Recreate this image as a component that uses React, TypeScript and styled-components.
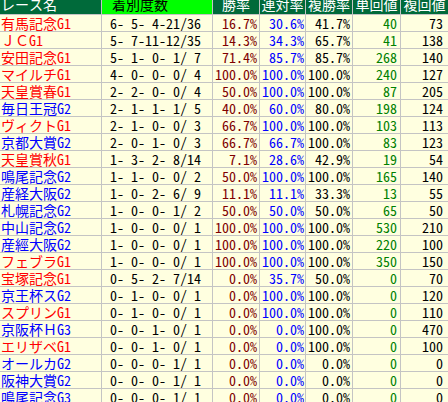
import React from "react";
import styled, { createGlobalStyle } from "styled-components";

const Global = createGlobalStyle`
  html, body { margin: 0; padding: 0; background: #ffffff; overflow: hidden; }
  body { width: 448px; height: 402px; }
`;

const COLS = "101px 110px 46px 45px 46px 47px 47px";
const MONO = `"Noto Sans Mono CJK JP", "DejaVu Sans Mono", monospace`;

const Table = styled.div`
  width: 448px;
  height: 402px;
  overflow: hidden;
  display: flex;
  flex-direction: column;
  row-gap: 1px;
  background: #c4c4c4;
  font-family: ${MONO};
`;

const HeaderRow = styled.div`
  display: grid;
  grid-template-columns: ${COLS};
  column-gap: 1px;
  height: 14px;
  flex: none;
`;

const HeaderCell = styled.div<{ $bright?: boolean; $left?: number }>`
  background: ${(p) => (p.$bright ? "#00ff00" : "#006a3a")};
  color: ${(p) => (p.$bright ? "#000000" : "#ffffff")};
  font-size: 14px;
  line-height: 8px;
  height: 14px;
  overflow: hidden;
  white-space: nowrap;
  display: flex;
  align-items: flex-start;
  justify-content: ${(p) => (p.$left !== undefined ? "flex-start" : "center")};
  padding-left: ${(p) => p.$left ?? 0}px;
`;

const Row = styled.div`
  display: grid;
  grid-template-columns: ${COLS};
  column-gap: 1px;
  height: 16px;
  flex: none;
`;

const Cell = styled.div<{ $color: string; $pad?: number; $left?: boolean }>`
  background: #ffffe0;
  color: ${(p) => p.$color};
  font-size: 14px;
  line-height: 16px;
  white-space: pre;
  display: flex;
  align-items: center;
  justify-content: ${(p) => (p.$left ? "flex-start" : "flex-end")};
  padding: ${(p) => (p.$left ? `0 0 0 ${p.$pad ?? 0}px` : `0 ${p.$pad ?? 2}px 0 0`)};
  overflow: hidden;
`;

type R = [string, string, string, string, string, string, string];

const rows: R[] = [
  ["有馬記念G1", "6- 5- 4-21/36", "16.7%", "30.6%", "41.7%", "40", "73"],
  ["ＪＣG1", "5- 7-11-12/35", "14.3%", "34.3%", "65.7%", "41", "138"],
  ["安田記念G1", "5- 1- 0- 1/ 7", "71.4%", "85.7%", "85.7%", "268", "140"],
  ["マイルチG1", "4- 0- 0- 0/ 4", "100.0%", "100.0%", "100.0%", "240", "127"],
  ["天皇賞春G1", "2- 2- 0- 0/ 4", "50.0%", "100.0%", "100.0%", "87", "205"],
  ["毎日王冠G2", "2- 1- 1- 1/ 5", "40.0%", "60.0%", "80.0%", "198", "124"],
  ["ヴィクトG1", "2- 1- 0- 0/ 3", "66.7%", "100.0%", "100.0%", "103", "113"],
  ["京都大賞G2", "2- 0- 1- 0/ 3", "66.7%", "66.7%", "100.0%", "83", "123"],
  ["天皇賞秋G1", "1- 3- 2- 8/14", "7.1%", "28.6%", "42.9%", "19", "54"],
  ["鳴尾記念G2", "1- 1- 0- 0/ 2", "50.0%", "100.0%", "100.0%", "165", "140"],
  ["産経大阪G2", "1- 0- 2- 6/ 9", "11.1%", "11.1%", "33.3%", "13", "55"],
  ["札幌記念G2", "1- 0- 0- 1/ 2", "50.0%", "50.0%", "50.0%", "65", "50"],
  ["中山記念G2", "1- 0- 0- 0/ 1", "100.0%", "100.0%", "100.0%", "530", "210"],
  ["産經大阪G2", "1- 0- 0- 0/ 1", "100.0%", "100.0%", "100.0%", "220", "100"],
  ["フェブラG1", "1- 0- 0- 0/ 1", "100.0%", "100.0%", "100.0%", "350", "150"],
  ["宝塚記念G1", "0- 5- 2- 7/14", "0.0%", "35.7%", "50.0%", "0", "70"],
  ["京王杯スG2", "0- 1- 0- 0/ 1", "0.0%", "100.0%", "100.0%", "0", "120"],
  ["スプリンG1", "0- 1- 0- 0/ 1", "0.0%", "100.0%", "100.0%", "0", "110"],
  ["京阪杯ＨG3", "0- 0- 1- 0/ 1", "0.0%", "0.0%", "100.0%", "0", "470"],
  ["エリザベG1", "0- 0- 1- 0/ 1", "0.0%", "0.0%", "100.0%", "0", "100"],
  ["オールカG2", "0- 0- 0- 1/ 1", "0.0%", "0.0%", "0.0%", "0", "0"],
  ["阪神大賞G2", "0- 0- 0- 1/ 1", "0.0%", "0.0%", "0.0%", "0", "0"],
  ["鳴尾記念G3", "0- 0- 0- 1/ 1", "0.0%", "0.0%", "0.0%", "0", "0"],
];

export default function App() {
  return (
    <>
      <Global />
      <Table>
        <HeaderRow>
          <HeaderCell $left={1}>レース名</HeaderCell>
          <HeaderCell $bright $left={10}>着別度数</HeaderCell>
          <HeaderCell>勝率</HeaderCell>
          <HeaderCell>連対率</HeaderCell>
          <HeaderCell>複勝率</HeaderCell>
          <HeaderCell>単回値</HeaderCell>
          <HeaderCell>複回値</HeaderCell>
        </HeaderRow>
        {rows.map((r, i) => (
          <Row key={i}>
            <Cell $left $pad={1} $color={r[0].endsWith("G1") ? "#ff0000" : "#0000ff"}>
              {r[0]}
            </Cell>
            <Cell $left $pad={8} $color="#000000">{r[1]}</Cell>
            <Cell $pad={2} $color="#800000">{r[2]}</Cell>
            <Cell $pad={1} $color="#0000ff">{r[3]}</Cell>
            <Cell $pad={2} $color="#000000">{r[4]}</Cell>
            <Cell $pad={3} $color="#008000">{r[5]}</Cell>
            <Cell $pad={5} $color="#000000">{r[6]}</Cell>
          </Row>
        ))}
      </Table>
    </>
  );
}
